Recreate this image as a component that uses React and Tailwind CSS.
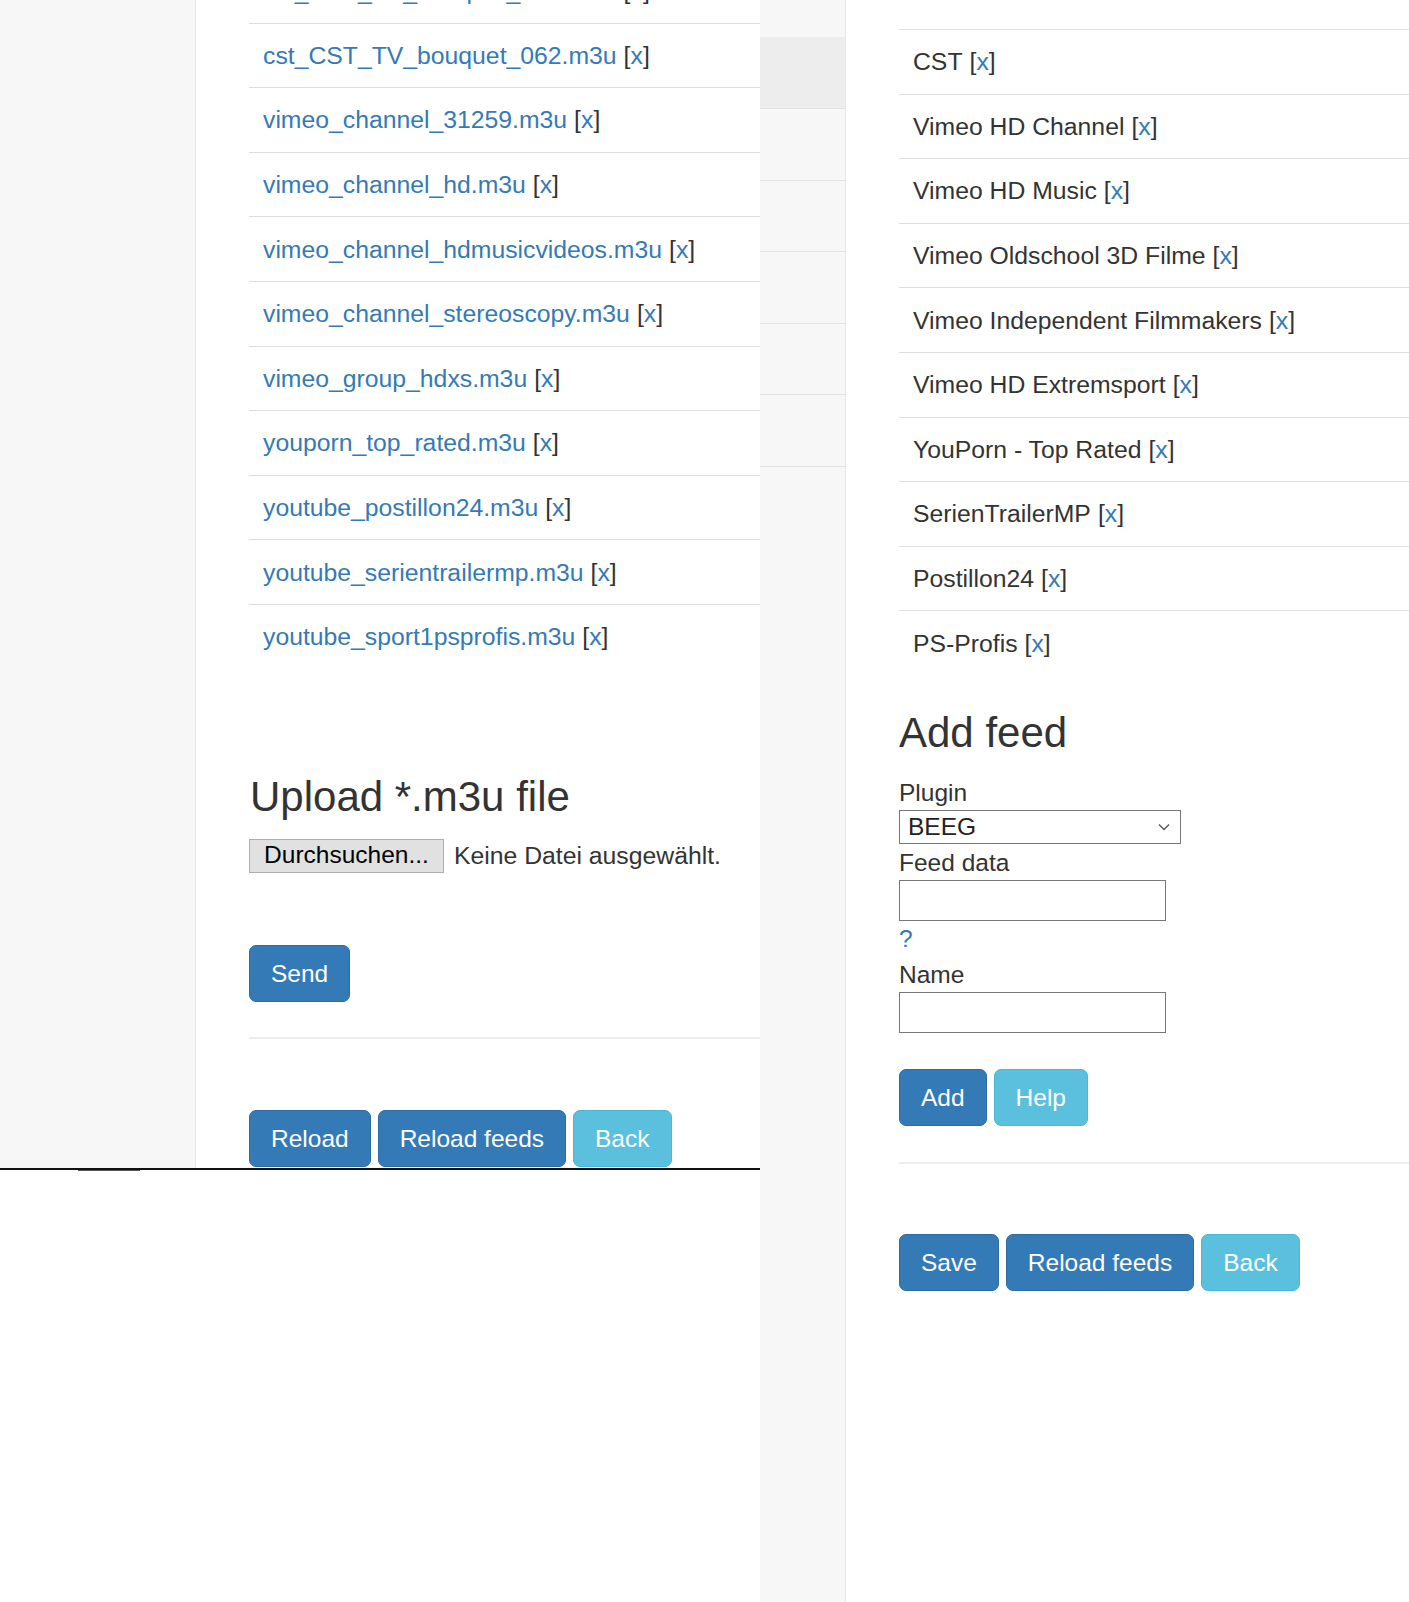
// Feed-Verwaltung: Playlist-Liste links, Feed-Liste + "Add feed" rechts
const playlists = [
    'cst_CST_TV_bouquet_061.m3u',
    'cst_CST_TV_bouquet_062.m3u',
    'vimeo_channel_31259.m3u',
    'vimeo_channel_hd.m3u',
    'vimeo_channel_hdmusicvideos.m3u',
    'vimeo_channel_stereoscopy.m3u',
    'vimeo_group_hdxs.m3u',
    'youporn_top_rated.m3u',
    'youtube_postillon24.m3u',
    'youtube_serientrailermp.m3u',
    'youtube_sport1psprofis.m3u',
];

const feeds = [
    'CST',
    'Vimeo HD Channel',
    'Vimeo HD Music',
    'Vimeo Oldschool 3D Filme',
    'Vimeo Independent Filmmakers',
    'Vimeo HD Extremsport',
    'YouPorn - Top Rated',
    'SerienTrailerMP',
    'Postillon24',
    'PS-Profis',
];

function Del() {
    return (
        <span className="text-[#333]">
            [<a href="#" className="text-[#337ab7]">x</a>]
        </span>
    );
}

function Btn({ children, info }) {
    return (
        <button
            type="button"
            className={
                info
                    ? 'bg-[#5bc0de] border-[1.75px] border-[#46b8da] text-white rounded-[7px] px-[21px] py-[10px] leading-[35px] text-[24.5px]'
                    : 'bg-[#337ab7] border-[1.75px] border-[#2e6da4] text-white rounded-[7px] px-[21px] py-[10px] leading-[35px] text-[24.5px]'
            }
        >
            {children}
        </button>
    );
}

export default function App() {
    return (
        <div className="flex w-[1409px] h-[1602px] overflow-hidden bg-white text-[#333] text-[24.5px] font-['Liberation_Sans',Arial,sans-serif]">
            {/* linke Seite */}
            <div className="w-[760px] shrink-0 flex flex-col">
                <div className="h-[1170px] flex overflow-hidden border-b-2 border-[#111]">
                    <div className="w-[196px] shrink-0 bg-[#f7f7f7] border-r border-[#e7e7e7]" />
                    <div className="flex-1 pl-[53px] overflow-hidden">
                        <div className="-mt-[42px] text-[24.75px]">
                            {playlists.map((p) => (
                                <div key={p} className="h-[64.6px] border-t border-[#dddddd] px-[14px] flex items-center whitespace-nowrap">
                                    <a href="#" className="text-[#337ab7]">{p}</a>
                                    <span className="ml-[7px]"><Del /></span>
                                </div>
                            ))}
                        </div>

                        <h3 className="mt-[105px] text-[42px] leading-[46px] pl-px">Upload *.m3u file</h3>
                        <div className="mt-[19px] flex items-center h-[34px]">
                            <span className="h-[34px] w-[195px] bg-[#e1e1e1] border border-[#adadad] text-black flex items-center justify-center leading-none">
                                Durchsuchen...
                            </span>
                            <span className="ml-[10px] text-[24.75px]">Keine Datei ausgewählt.</span>
                        </div>
                        <div className="mt-[72px]">
                            <Btn>Send</Btn>
                        </div>
                        <div className="mt-[35px] h-[2px] bg-[#eeeeee]" />
                        <div className="mt-[71px] flex gap-[7px]">
                            <Btn>Reload</Btn>
                            <Btn>Reload feeds</Btn>
                            <Btn info>Back</Btn>
                        </div>
                    </div>
                </div>
                <div className="ml-[78px] w-[62px] h-px bg-[#555]" />
            </div>

            {/* graue Spalte */}
            <div className="w-[86px] shrink-0 bg-[#f7f7f7] border-r border-[#e7e7e7] flex flex-col">
                <div className="h-[37px]" />
                <div className="h-[72px] bg-[#ededed] border-b border-[#e2e2e2]" />
                <div className="h-[71.6px] border-b border-[#e2e2e2]" />
                <div className="h-[71.6px] border-b border-[#e2e2e2]" />
                <div className="h-[71.6px] border-b border-[#e2e2e2]" />
                <div className="h-[71.6px] border-b border-[#e2e2e2]" />
                <div className="h-[71.6px] border-b border-[#e2e2e2]" />
            </div>

            {/* rechte Seite */}
            <div className="flex-1 pl-[53px] pt-[29px] min-w-0">
                <div className="text-[24.75px]">
                    {feeds.map((f) => (
                        <div key={f} className="h-[64.6px] border-t border-[#dddddd] px-[14px] flex items-center whitespace-nowrap">
                            <span>{f}</span>
                            <span className="ml-[7px]"><Del /></span>
                        </div>
                    ))}
                </div>

                <h3 className="mt-[35px] text-[42px] leading-[46px]">Add feed</h3>
                <div className="mt-[19px] leading-[35px]">Plugin</div>
                <div className="w-[282px] h-[34px] border border-[#767676] flex items-center justify-between pl-[8px] pr-[10px] text-[#222]">
                    <span>BEEG</span>
                    <svg width="12" height="8" viewBox="0 0 12 8" fill="none" stroke="#555" strokeWidth="1.3">
                        <path d="M1 1.5 L6 6.5 L11 1.5" />
                    </svg>
                </div>
                <div className="mt-px leading-[35px]">Feed data</div>
                <div className="w-[267px] h-[41px] border border-[#767676]" />
                <a href="#" className="block leading-[35px] text-[#337ab7]">?</a>
                <div className="mt-px leading-[35px]">Name</div>
                <div className="w-[267px] h-[41px] border border-[#767676]" />
                <div className="mt-[36px] flex gap-[7px]">
                    <Btn>Add</Btn>
                    <Btn info>Help</Btn>
                </div>
                <div className="mt-[36px] h-[2px] bg-[#eeeeee]" />
                <div className="mt-[70px] flex gap-[7px]">
                    <Btn>Save</Btn>
                    <Btn>Reload feeds</Btn>
                    <Btn info>Back</Btn>
                </div>
            </div>
        </div>
    );
}
